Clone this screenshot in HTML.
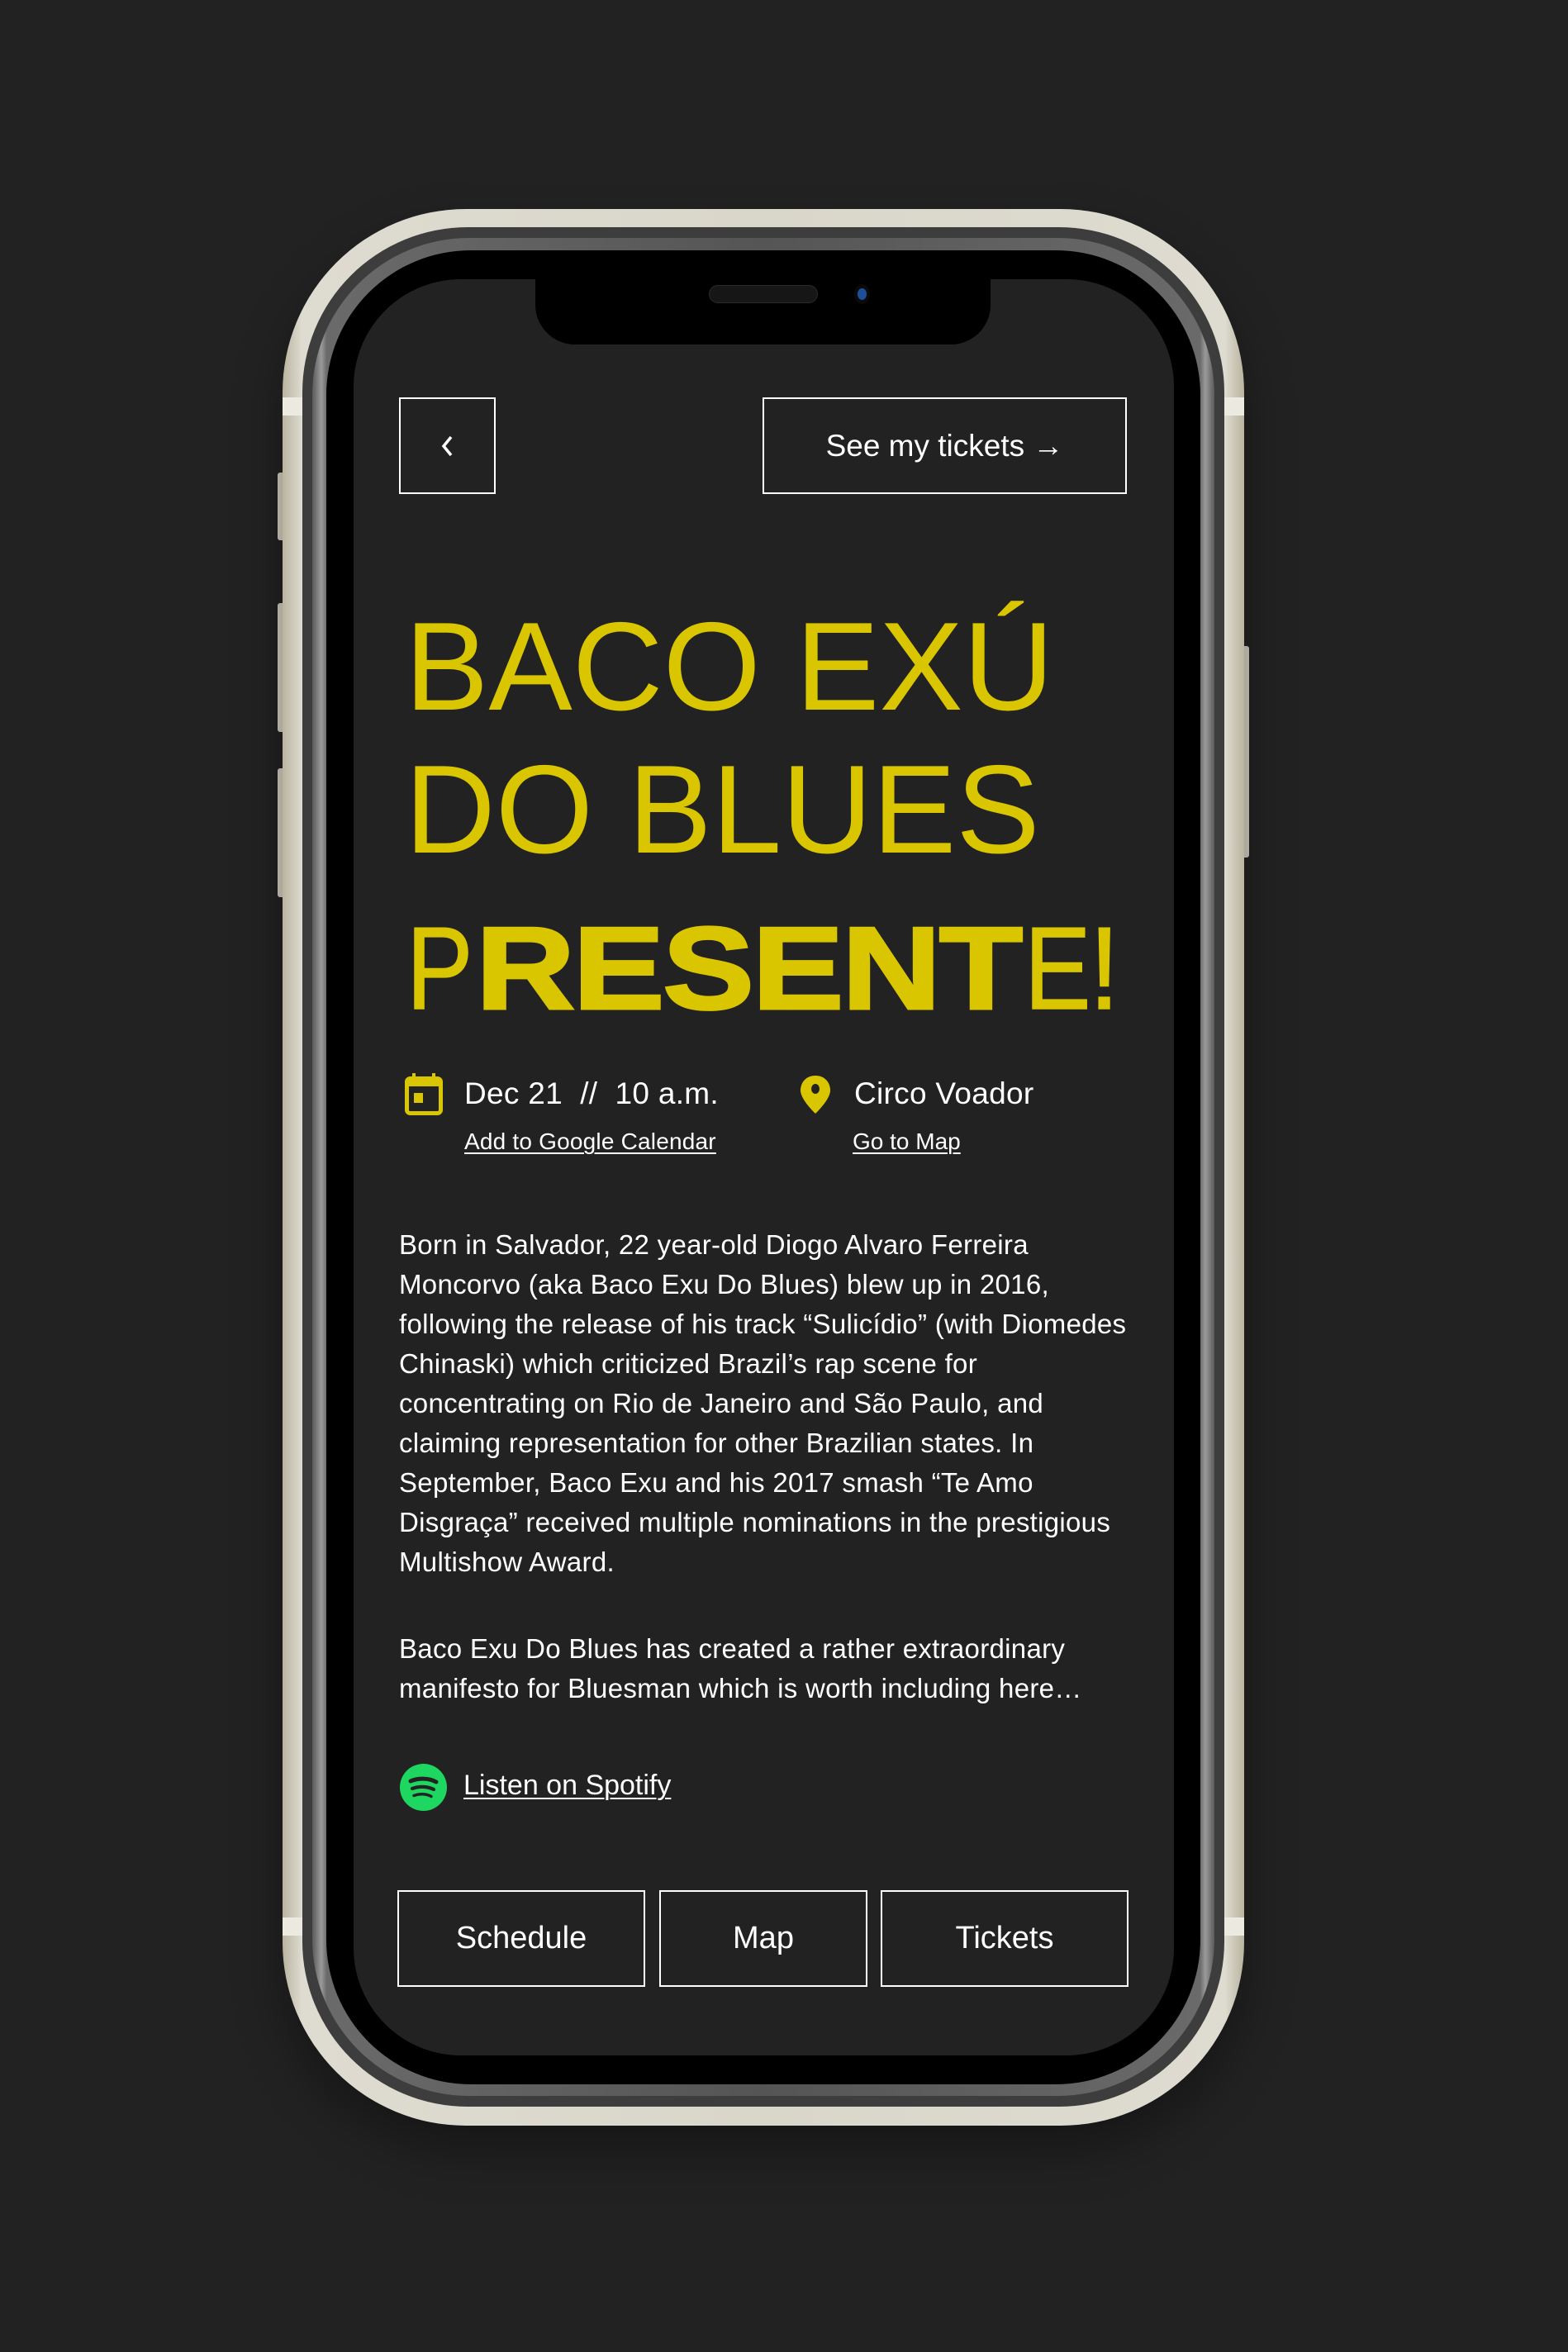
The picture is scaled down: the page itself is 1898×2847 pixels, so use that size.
<!DOCTYPE html>
<html><head><meta charset="utf-8">
<style>
*{margin:0;padding:0;box-sizing:border-box}
body{width:1898px;height:2847px;background:#222222;position:relative;overflow:hidden;font-family:"Liberation Sans",Arial,sans-serif;color:#fff}
.a{position:absolute}
.beige{left:342px;top:253px;width:1164px;height:2320px;border-radius:222px;background:linear-gradient(90deg,#b9b49f 0,#dedbd0 2%,#d9d6ca 50%,#dedbd0 98%,#b9b49f 100%);box-shadow:0 30px 60px rgba(0,0,0,.35)}
.dark{left:366px;top:275px;width:1116px;height:2275px;border-radius:200px;background:#3d3d3d}
.ring{left:378px;top:288px;width:1092px;height:2249px;border-radius:190px;background:linear-gradient(90deg,#5a5a5a,#9a9a9a 1%,#6a6a6a 1.6%,#555 50%,#6a6a6a 98.4%,#9a9a9a 99%,#5a5a5a)}
.black{left:395px;top:303px;width:1058px;height:2220px;border-radius:175px;background:#000}
.screen{left:428px;top:338px;width:993px;height:2150px;border-radius:130px;background:#222222;overflow:hidden}
.band{background:#ebe9e0;height:22px}
.btn{border:2px solid #fff;display:flex;align-items:center;justify-content:center;color:#fff}
.y{color:#d9c600}
.line{position:absolute;left:483px;font-size:33px;line-height:48px;white-space:nowrap;letter-spacing:0.3px}
u{text-underline-offset:4px;text-decoration-thickness:2px}
</style></head><body>
<div class="a" style="left:336px;top:572px;width:10px;height:82px;background:#cfcbbd;border-radius:3px 0 0 3px"></div>
<div class="a" style="left:336px;top:730px;width:10px;height:156px;background:#cfcbbd;border-radius:3px 0 0 3px"></div>
<div class="a" style="left:336px;top:930px;width:10px;height:156px;background:#cfcbbd;border-radius:3px 0 0 3px"></div>
<div class="a" style="left:1502px;top:782px;width:10px;height:256px;background:#cfcbbd;border-radius:0 3px 3px 0"></div>
<div class="a beige"></div>
<div class="a band" style="left:342px;top:481px;width:24px"></div>
<div class="a band" style="left:1482px;top:481px;width:24px"></div>
<div class="a band" style="left:342px;top:2321px;width:24px"></div>
<div class="a band" style="left:1482px;top:2321px;width:24px"></div>
<div class="a dark"></div>
<div class="a ring"></div>
<div class="a black"></div>
<div class="a screen"></div>
<div class="a" style="left:648px;top:330px;width:551px;height:87px;background:#000;border-radius:0 0 48px 48px"></div>
<div class="a" style="left:858px;top:345px;width:132px;height:22px;background:#161616;border-radius:11px;border:1px solid #2a2a2a"></div>
<div class="a" style="left:1034px;top:344px;width:19px;height:24px;background:#0a0a0a;border-radius:50%"></div>
<div class="a" style="left:1038px;top:349px;width:11px;height:14px;background:#1f4f9a;border-radius:50%"></div>

<div class="a btn" style="left:483px;top:481px;width:117px;height:117px">
<svg width="24" height="30" viewBox="0 0 24 30"><path d="M16 4 L7 15 L16 26" fill="none" stroke="#fff" stroke-width="3.5"/></svg></div>
<div class="a btn" style="left:923px;top:481px;width:441px;height:117px;font-size:37px">See my tickets →</div>

<div class="a y" style="left:490px;top:731px;font-size:152px;line-height:152px;white-space:nowrap">BACO EXÚ</div>
<div class="a y" style="left:490px;top:904px;font-size:152px;line-height:152px;white-space:nowrap">DO BLUES</div>
<div class="a y" style="left:492px;top:1102px;font-size:142px;line-height:142px;transform:scaleX(.85);transform-origin:left;-webkit-text-stroke:1.5px #d9c600">P</div>
<div class="a y" style="left:576px;top:1102px;font-size:142px;line-height:142px;font-weight:bold;transform:scaleX(1.17);transform-origin:left;letter-spacing:-2px;-webkit-text-stroke:3px #d9c600">RESENT</div>
<div class="a y" style="left:1240px;top:1102px;font-size:142px;line-height:142px;transform:scaleX(.85);transform-origin:left;-webkit-text-stroke:1.5px #d9c600">E</div>
<div class="a y" style="left:1318px;top:1102px;font-size:142px;line-height:142px;transform:scaleX(.95);transform-origin:left;-webkit-text-stroke:1.5px #d9c600">!</div>

<svg class="a" style="left:490px;top:1299px" width="46" height="52" viewBox="0 0 46 52"><rect x="9" y="0" width="4" height="9" fill="#d9c600"/><rect x="33" y="0" width="4" height="9" fill="#d9c600"/><rect x="2.5" y="6.5" width="41" height="42" rx="4" fill="none" stroke="#d9c600" stroke-width="5"/><rect x="3" y="7" width="40" height="9" fill="#d9c600"/><rect x="11" y="24" width="11" height="12" fill="#d9c600"/></svg>
<div class="a" style="left:562px;top:1305px;font-size:37px;line-height:37px;white-space:nowrap;letter-spacing:0.3px">Dec 21&nbsp;&nbsp;//&nbsp;&nbsp;10 a.m.</div>
<div class="a" style="left:562px;top:1368px;font-size:28px;line-height:28px;white-space:nowrap;letter-spacing:0.2px"><u>Add to Google Calendar</u></div>
<svg class="a" style="left:968px;top:1301px" width="38" height="48" viewBox="0 0 38 48"><path d="M19 1 C8 1 1 9 1 19 C1 30 19 47 19 47 C19 47 37 30 37 19 C37 9 30 1 19 1 Z" fill="#d9c600"/><ellipse cx="19" cy="17" rx="5" ry="6" fill="#222"/></svg>
<div class="a" style="left:1034px;top:1305px;font-size:37px;line-height:37px;white-space:nowrap;letter-spacing:0.3px">Circo Voador</div>
<div class="a" style="left:1032px;top:1368px;font-size:28px;line-height:28px;white-space:nowrap"><u>Go to Map</u></div>

<div class="line" style="top:1483px">Born in Salvador, 22 year-old Diogo Alvaro Ferreira</div>
<div class="line" style="top:1531px">Moncorvo (aka Baco Exu Do Blues) blew up in 2016,</div>
<div class="line" style="top:1579px">following the release of his track “Sulicídio” (with Diomedes</div>
<div class="line" style="top:1627px">Chinaski) which criticized Brazil’s rap scene for</div>
<div class="line" style="top:1675px">concentrating on Rio de Janeiro and São Paulo, and</div>
<div class="line" style="top:1723px">claiming representation for other Brazilian states. In</div>
<div class="line" style="top:1771px">September, Baco Exu and his 2017 smash “Te Amo</div>
<div class="line" style="top:1819px">Disgraça” received multiple nominations in the prestigious</div>
<div class="line" style="top:1867px">Multishow Award.</div>
<div class="line" style="top:1972px">Baco Exu Do Blues has created a rather extraordinary</div>
<div class="line" style="top:2020px">manifesto for Bluesman which is worth including here…</div>

<svg class="a" style="left:484px;top:2135px" width="57" height="57" viewBox="0 0 57 57"><circle cx="28.5" cy="28.5" r="28.5" fill="#1ed760"/><path d="M13 21 C22 17 35 17 44 22" fill="none" stroke="#222" stroke-width="5" stroke-linecap="round"/><path d="M15 30 C23 27 33 27 41 31" fill="none" stroke="#222" stroke-width="4.2" stroke-linecap="round"/><path d="M17 38.5 C24 36 32 36 38 39.5" fill="none" stroke="#222" stroke-width="3.5" stroke-linecap="round"/></svg>
<div class="a" style="left:561px;top:2137px;font-size:34px;line-height:48px;white-space:nowrap"><u>Listen on Spotify</u></div>

<div class="a btn" style="left:481px;top:2288px;width:300px;height:117px;font-size:38px">Schedule</div>
<div class="a btn" style="left:798px;top:2288px;width:252px;height:117px;font-size:38px">Map</div>
<div class="a btn" style="left:1066px;top:2288px;width:300px;height:117px;font-size:38px">Tickets</div>
</body></html>
